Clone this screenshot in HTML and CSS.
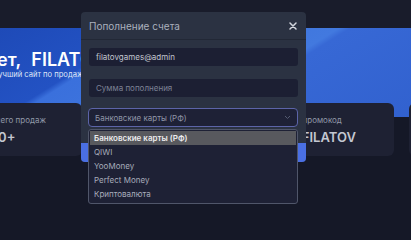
FILE: index.html
```html
<!DOCTYPE html>
<html lang="ru">
<head>
    <meta charset="UTF-8">
    <meta name="viewport" content="width=device-width, initial-scale=1.0">
    <title>Пополнение счета</title>
    <link rel="stylesheet" href="styles.css">
</head>
<body>
<div class="page">
    <div class="topbar"></div>

    <section class="hero">
        <h1 class="hero-title">Привет, FILATOV!</h1>
        <p class="hero-text">Возможно, лучший сайт по продаже игровых аккаунтов</p>
    </section>

    <div class="stats">
        <div class="stat-card">
            <div class="stat-label">Сделано всего продаж</div>
            <div class="stat-value">100 000+</div>
        </div>
        <div class="stat-card">
            <div class="stat-label">Пользователей</div>
            <div class="stat-value">25 000+</div>
        </div>
        <div class="stat-card">
            <div class="stat-label">Рабочий промокод</div>
            <div class="stat-value">GIFT-FILATOV</div>
        </div>
        <div class="stat-card">
            <div class="stat-label">Поддержка</div>
            <div class="stat-value">24/7</div>
        </div>
    </div>
</div>

<!-- модальное окно пополнения -->
<div class="modal">
    <div class="modal-header">
        <span class="modal-title">Пополнение счета</span>
        <svg class="modal-close" width="8" height="8" viewBox="0 0 8 8">
            <path d="M1 1L7 7M7 1L1 7" stroke="#d3d6de" stroke-width="1.5" stroke-linecap="round"/>
        </svg>
    </div>
    <div class="modal-body">
        <div class="field">filatovgames@admin</div>
        <div class="field placeholder">Сумма пополнения</div>
        <div class="select-wrap">
            <div class="select">
                <span>Банковские карты (РФ)</span>
                <svg width="7" height="5" viewBox="0 0 7 5">
                    <path d="M1 1L3.5 3.5L6 1" stroke="#535a70" stroke-width="1" fill="none"/>
                </svg>
            </div>
            <ul class="dropdown">
                <li class="active">Банковские карты (РФ)</li>
                <li>QIWI</li>
                <li>YooMoney</li>
                <li>Perfect Money</li>
                <li>Криптовалюта</li>
            </ul>
        </div>
    </div>
    <button type="button" class="modal-button">Пополнить</button>
</div>
</body>
</html>
```

FILE: styles.css
```css
body {
    font-family: Inter, "Noto Sans", sans-serif;
    margin: 0;
    background-color: #151827;
    overflow: hidden;
}

.page {
    width: 609px;
    margin-left: -59px;
}

.topbar {
    height: 28px;
    background-color: #191c2b;
}

.hero {
    height: 89px;
    box-sizing: border-box;
    padding: 22px 14px 0 10px;
    border-radius: 8px;
    background: linear-gradient(148deg, #1c47b3 0%, #2352c3 27%, #3a70dc 28.5%, #4279df 53%, #3768d5 54.5%, #2e5dcb 100%);
}

.hero-title {
    margin: 0;
    font-size: 18px;
    font-weight: 600;
    line-height: 20px;
    word-spacing: 6px;
    color: #fff;
    white-space: nowrap;
}

.hero-text {
    margin: 0;
    font-size: 7.6px;
    line-height: 10px;
    color: #dfe6f7;
    white-space: nowrap;
}

.stats {
    display: grid;
    grid-template-columns: repeat(4, 141px);
    column-gap: 15px;
    margin-top: -14px;
}

.stat-card {
    height: 53px;
    box-sizing: border-box;
    padding: 12px 14px 0;
    background-color: #1e2133;
    border-radius: 6px;
}

.stat-label {
    font-size: 8px;
    line-height: 10px;
    color: #9198a8;
}

.stat-value {
    margin-top: 4px;
    font-size: 13px;
    font-weight: 600;
    line-height: 16px;
    color: #c3c7d1;
}

.modal {
    position: fixed;
    left: 81px;
    top: 12px;
    width: 225px;
    background-color: #2b3242;
    border-radius: 4px;
}

.modal-header {
    display: flex;
    justify-content: space-between;
    align-items: center;
    height: 27px;
    padding: 0 8px;
    border-bottom: 1px solid #222836;
}

.modal-title {
    font-size: 10px;
    color: #aab0bd;
}

.modal-close {
    margin-right: 1px;
}

.modal-body {
    display: flex;
    flex-direction: column;
    padding: 8px 8px 16px;
}

.field {
    height: 18px;
    margin-bottom: 13px;
    padding: 0 7px;
    background-color: #1c1f33;
    border-radius: 3px;
    font-size: 8px;
    line-height: 18px;
    color: #c2c6d0;
}

.field.placeholder {
    margin-bottom: 11px;
    color: #7c8296;
}

.select-wrap {
    position: relative;
    margin-left: -1px;
}

.select {
    display: flex;
    justify-content: space-between;
    align-items: center;
    height: 17px;
    padding: 0 6px;
    border: 1px solid #5c64a8;
    border-radius: 4px;
    background-color: #1e2136;
    font-size: 8px;
    color: #8f95a6;
}

.dropdown {
    position: absolute;
    left: 0;
    right: 0;
    top: 21px;
    margin: 0;
    padding: 1px 1px 2px;
    list-style: none;
    background-color: #1e2135;
    border: 1px solid #50566a;
    border-radius: 3px;
}

.dropdown li {
    height: 14px;
    padding: 0 4px;
    font-size: 8px;
    line-height: 14px;
    color: #a7acba;
}

.dropdown li.active {
    background-color: #58595e;
    color: #ececee;
    font-weight: 600;
}

.modal-button {
    display: block;
    width: 100%;
    height: 19px;
    padding: 0;
    border: none;
    border-radius: 0 0 4px 4px;
    background-color: #4a6fe3;
    color: #fff;
    font-family: inherit;
    font-size: 9px;
}
```
